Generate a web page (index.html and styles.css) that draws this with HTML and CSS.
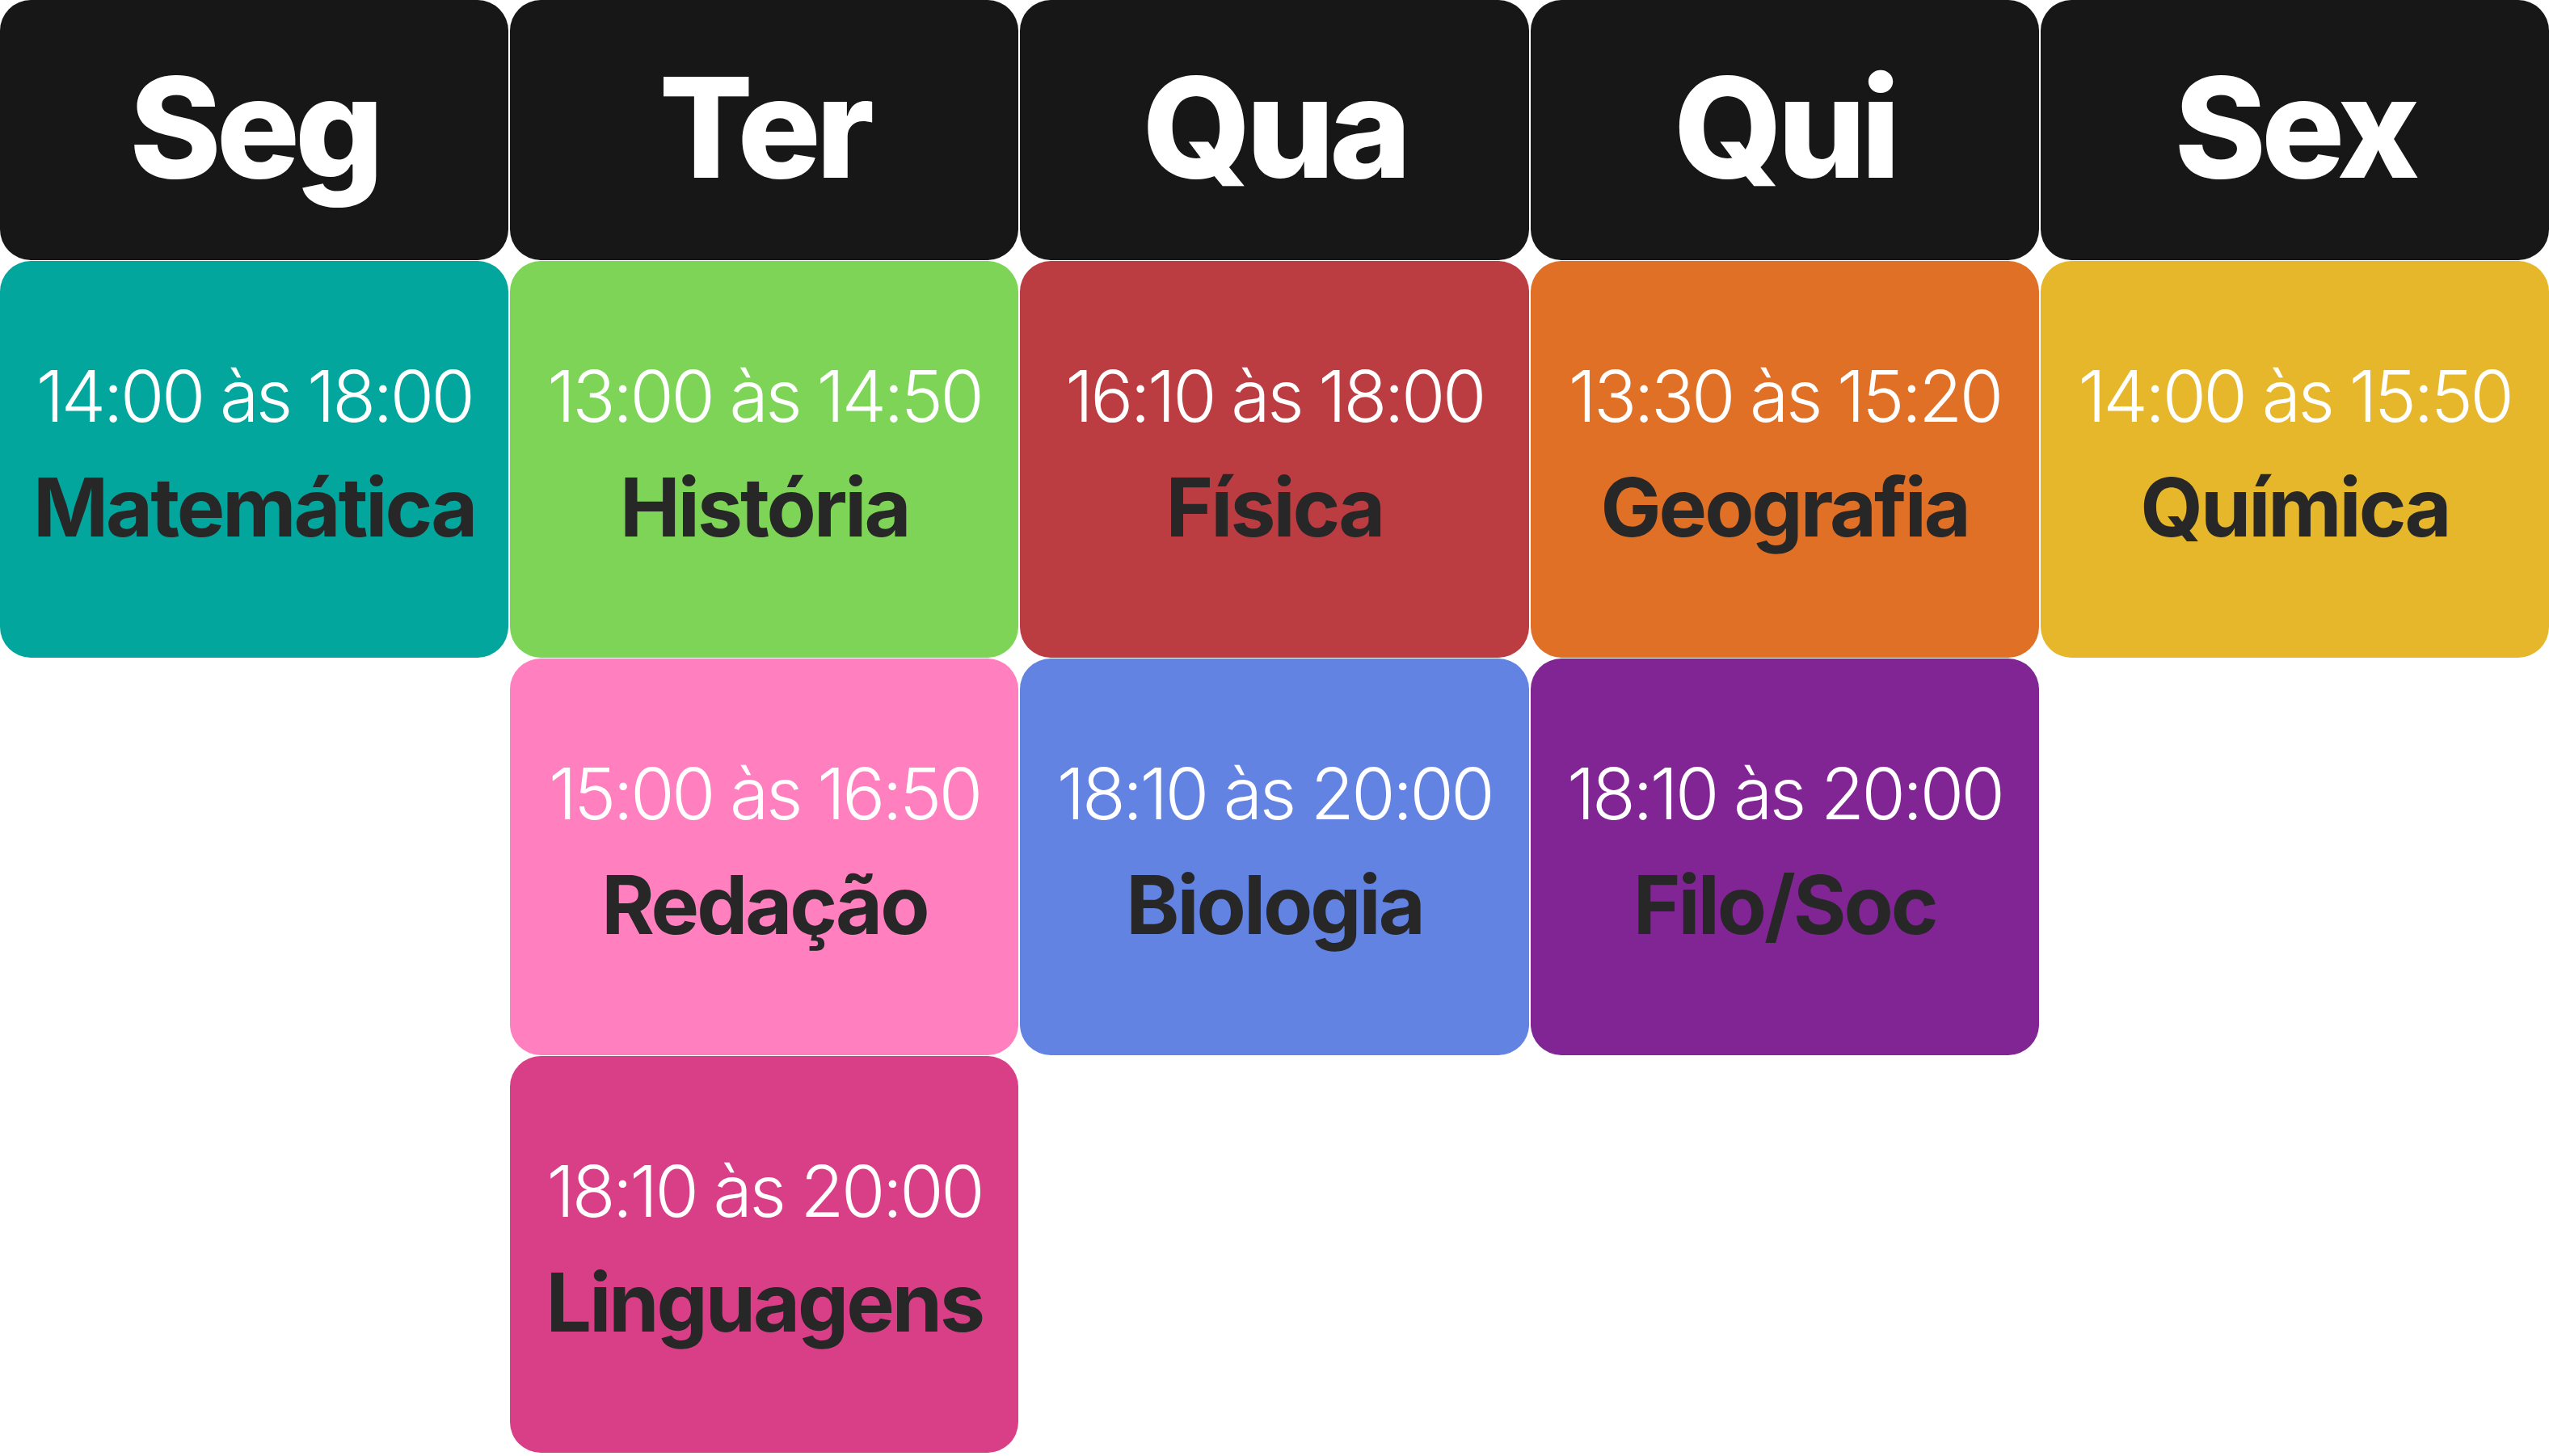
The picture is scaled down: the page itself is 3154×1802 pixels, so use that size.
FILE: index.html
```html
<!DOCTYPE html>
<html lang="pt-BR">
<head>
<meta charset="utf-8">
<title>Horário</title>
<link rel="stylesheet" href="styles.css">
</head>
<body>
<div class="week">
	<div class="day">
		<div class="day-name">Seg</div>
		<div class="lesson teal">
			<div class="time">14:00 às 18:00</div>
			<div class="subject">Matemática</div>
		</div>
	</div>
	<div class="day">
		<div class="day-name">Ter</div>
		<div class="lesson green">
			<div class="time">13:00 às 14:50</div>
			<div class="subject">História</div>
		</div>
		<div class="lesson pink">
			<div class="time">15:00 às 16:50</div>
			<div class="subject">Redação</div>
		</div>
		<div class="lesson magenta">
			<div class="time">18:10 às 20:00</div>
			<div class="subject">Linguagens</div>
		</div>
	</div>
	<div class="day">
		<div class="day-name">Qua</div>
		<div class="lesson red">
			<div class="time">16:10 às 18:00</div>
			<div class="subject">Física</div>
		</div>
		<div class="lesson blue">
			<div class="time">18:10 às 20:00</div>
			<div class="subject">Biologia</div>
		</div>
	</div>
	<div class="day">
		<div class="day-name">Qui</div>
		<div class="lesson orange">
			<div class="time">13:30 às 15:20</div>
			<div class="subject">Geografia</div>
		</div>
		<div class="lesson purple">
			<div class="time">18:10 às 20:00</div>
			<div class="subject">Filo/Soc</div>
		</div>
	</div>
	<div class="day">
		<div class="day-name">Sex</div>
		<div class="lesson yellow">
			<div class="time">14:00 às 15:50</div>
			<div class="subject">Química</div>
		</div>
	</div>
</div>
</body>
</html>
```

FILE: styles.css
```css
html, body {
	margin:0px;
	padding:0px;
	background-color:#fff;
}

.week {
	display:flex;
	gap:2px;
	width:3154px;
	font-family: Inter, "Liberation Sans", sans-serif;
}

.day {
	flex:1;
	display:flex;
	flex-direction:column;
	gap:1px;
}

.day-name {
	height:322px;
	display:flex;
	align-items:center;
	justify-content:center;
	background-color:#171717;
	color:#fff;
	border-radius:38px;
	font-size:172px;
	font-weight:800;
	letter-spacing:-6px;
	padding-bottom:8px;
	box-sizing:border-box;
}

.lesson {
	height:491px;
	display:flex;
	flex-direction:column;
	align-items:center;
	justify-content:center;
	border-radius:38px;
	padding-bottom:14px;
	box-sizing:border-box;
}

.time {
	color:#fff;
	font-size:88px;
	font-weight:300;
	letter-spacing:-3.5px;
	line-height:1;
}

.subject {
	color:#272727;
	font-size:100px;
	font-weight:700;
	letter-spacing:-3px;
	line-height:1;
	margin-top:44px;
}

.teal { background-color:#03a69d; }
.green { background-color:#7ed457; }
.pink { background-color:#ff7fbf; }
.magenta { background-color:#d93f87; }
.red { background-color:#bc3d41; }
.blue { background-color:#6383e3; }
.orange { background-color:#e07026; }
.purple { background-color:#812594; }
.yellow { background-color:#e6b72b; }
```
